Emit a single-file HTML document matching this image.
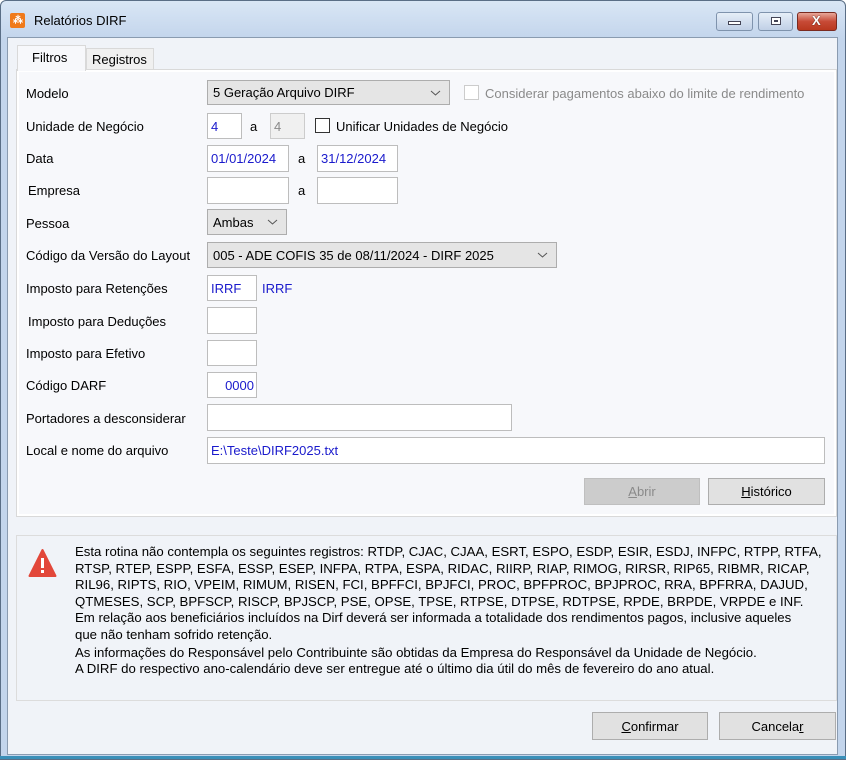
<!DOCTYPE html>
<html><head><meta charset="utf-8"><style>
*{box-sizing:border-box;margin:0;padding:0}
body{width:852px;height:763px;background:#fff;font-family:"Liberation Sans",sans-serif;font-size:13px;color:#000;position:relative;overflow:hidden}
.win{position:absolute;left:0;top:0;width:846px;height:760px;border:1px solid #5a6e86;border-radius:6px 6px 0 0;background:linear-gradient(#d9e6f5,#c3d5ec 38px,#c3d5ec);}
.client{position:absolute;left:7px;top:37px;width:831px;height:718px;background:#f0f3f8;border:1px solid #8a9bb0}
.bottomline{position:absolute;left:0;top:756px;width:846px;height:3px;background:#3a8fb8}
.a{position:absolute;white-space:nowrap}
.lbl{position:absolute;white-space:nowrap;font-size:13px}
.in{position:absolute;background:#fff;border:1px solid #bdbdbd;color:#1a1acc;padding-left:3px;font-size:13px;display:flex;align-items:center}
.dis{background:#f0f0f0;color:#888;border-color:#ccc}
.sel{position:absolute;background:#e5e5e5;border:1px solid #adadad;padding-left:5px;display:flex;align-items:center;font-size:13px}
.sel svg{position:absolute;right:8px;top:50%;margin-top:-3px}
.cb{position:absolute;width:15px;height:15px;background:#fff;border:1px solid #333}
.btn{position:absolute;background:#e1e1e1;border:1px solid #adadad;display:flex;align-items:center;justify-content:center;font-size:13px}
.wb{position:absolute;top:12px;height:19px;border:1px solid #7f93ad;border-radius:3px;background:linear-gradient(#e6eef8,#c0d0e6)}
</style></head><body>
<div class="win"></div>
<div class="a" style="left:10px;top:13px;width:15px;height:15px;background:#f07a1a;border-radius:2px"></div>
<div class="a" style="left:13px;top:15px;color:#fff;font-size:10px;font-weight:bold">⁂</div>
<div class="a" style="left:34px;top:13px;font-size:13px">Relatórios DIRF</div>
<div class="wb" style="left:716px;width:37px"><div style="position:absolute;left:11px;top:8px;width:13px;height:4px;background:#fff;border:1px solid #445"></div></div>
<div class="wb" style="left:758px;width:35px"><div style="position:absolute;left:12px;top:4px;width:10px;height:8px;border:1px solid #445;background:#fff"><div style="margin:2px;height:2px;background:#445"></div></div></div>
<div class="wb" style="left:797px;width:40px;background:linear-gradient(#e8a79a,#c74a36 50%,#b9381f);border-color:#7a2a20"><div style="position:absolute;left:14px;top:0px;color:#fff;font-weight:bold;font-size:13px;text-shadow:0 0 1px #000">X</div></div>
<div class="client"></div>
<div class="bottomline"></div>

<div class="a" style="left:86px;top:48px;width:68px;height:22px;background:#f0f0f0;border:1px solid #d9d9d9;border-bottom:none"></div>
<div class="a" style="left:92px;top:52px">Registros</div>
<div class="a" style="left:16px;top:69px;width:821px;height:448px;background:#f7f8fb;border:1px solid #d9d9d9;box-shadow:inset 0 0 0 2px #fff"></div>
<div class="a" style="left:17px;top:45px;width:69px;height:26px;background:#f7f8fb;border:1px solid #d9d9d9;border-bottom:none"></div>
<div class="a" style="left:32px;top:50px">Filtros</div>

<div class="lbl" style="left:26px;top:86px">Modelo</div>
<div class="sel" style="left:207px;top:80px;width:243px;height:25px">5 Geração Arquivo DIRF<svg width="11" height="6"><path d="M1 1l4.5 4 4.5-4" fill="none" stroke="#555"/></svg></div>
<div class="cb" style="left:464px;top:85px;border-color:#ccc"></div>
<div class="lbl" style="left:485px;top:86px;color:#8a8a8a">Considerar pagamentos abaixo do limite de rendimento</div>

<div class="lbl" style="left:26px;top:119px">Unidade de Negócio</div>
<div class="in" style="left:207px;top:113px;width:35px;height:26px">4</div>
<div class="lbl" style="left:250px;top:119px">a</div>
<div class="in dis" style="left:270px;top:113px;width:35px;height:26px">4</div>
<div class="cb" style="left:315px;top:118px"></div>
<div class="lbl" style="left:336px;top:119px">Unificar Unidades de Negócio</div>

<div class="lbl" style="left:26px;top:151px">Data</div>
<div class="in" style="left:207px;top:145px;width:82px;height:27px">01/01/2024</div>
<div class="lbl" style="left:298px;top:151px">a</div>
<div class="in" style="left:317px;top:145px;width:81px;height:27px">31/12/2024</div>

<div class="lbl" style="left:28px;top:183px">Empresa</div>
<div class="in" style="left:207px;top:177px;width:82px;height:27px"></div>
<div class="lbl" style="left:298px;top:183px">a</div>
<div class="in" style="left:317px;top:177px;width:81px;height:27px"></div>

<div class="lbl" style="left:26px;top:216px">Pessoa</div>
<div class="sel" style="left:207px;top:209px;width:80px;height:26px">Ambas<svg width="11" height="6"><path d="M1 1l4.5 4 4.5-4" fill="none" stroke="#555"/></svg></div>

<div class="lbl" style="left:26px;top:248px">Código da Versão do Layout</div>
<div class="sel" style="left:207px;top:242px;width:350px;height:26px">005 - ADE COFIS 35 de 08/11/2024 - DIRF 2025<svg width="11" height="6"><path d="M1 1l4.5 4 4.5-4" fill="none" stroke="#555"/></svg></div>

<div class="lbl" style="left:26px;top:281px">Imposto para Retenções</div>
<div class="in" style="left:207px;top:275px;width:50px;height:26px">IRRF</div>
<div class="lbl" style="left:262px;top:281px;color:#1a1acc">IRRF</div>

<div class="lbl" style="left:28px;top:314px">Imposto para Deduções</div>
<div class="in" style="left:207px;top:307px;width:50px;height:27px"></div>
<div class="lbl" style="left:26px;top:346px">Imposto para Efetivo</div>
<div class="in" style="left:207px;top:340px;width:50px;height:26px"></div>
<div class="lbl" style="left:26px;top:378px">Código DARF</div>
<div class="in" style="left:207px;top:372px;width:50px;height:26px;justify-content:flex-end;padding-right:2px">0000</div>
<div class="lbl" style="left:26px;top:411px">Portadores a desconsiderar</div>
<div class="in" style="left:207px;top:404px;width:305px;height:27px"></div>
<div class="lbl" style="left:26px;top:443px">Local e nome do arquivo</div>
<div class="in" style="left:207px;top:437px;width:618px;height:27px">E:\Teste\DIRF2025.txt</div>

<div class="btn" style="left:584px;top:478px;width:116px;height:27px;background:#ccc;border-color:#bfbfbf;color:#8a8a8a"><u>A</u>brir</div>
<div class="btn" style="left:708px;top:478px;width:117px;height:27px"><u>H</u>istórico</div>

<div class="a" style="left:16px;top:535px;width:821px;height:166px;border:1px solid #dcdcdc;background:#f0f3f8"></div>
<svg class="a" style="left:28px;top:548px" width="29" height="30"><path d="M14.5 2 L27.5 28 H1.5 Z" fill="#e2473a" stroke="#e2473a" stroke-linejoin="round" stroke-width="2"/><rect x="13" y="10" width="3" height="10" fill="#fff"/><rect x="13" y="22" width="3" height="3" fill="#fff"/></svg>
<div class="a" style="left:75px;top:544px;line-height:16.6px;font-size:13.2px">Esta rotina não contempla os seguintes registros: RTDP, CJAC, CJAA, ESRT, ESPO, ESDP, ESIR, ESDJ, INFPC, RTPP, RTFA,<br>RTSP, RTEP, ESPP, ESFA, ESSP, ESEP, INFPA, RTPA, ESPA, RIDAC, RIIRP, RIAP, RIMOG, RIRSR, RIP65, RIBMR, RICAP,<br>RIL96, RIPTS, RIO, VPEIM, RIMUM, RISEN, FCI, BPFFCI, BPJFCI, PROC, BPFPROC, BPJPROC, RRA, BPFRRA, DAJUD,<br>QTMESES, SCP, BPFSCP, RISCP, BPJSCP, PSE, OPSE, TPSE, RTPSE, DTPSE, RDTPSE, RPDE, BRPDE, VRPDE e INF.<br>Em relação aos beneficiários incluídos na Dirf deverá ser informada a totalidade dos rendimentos pagos, inclusive aqueles<br>que não tenham sofrido retenção.<br><span style="display:block;margin-top:1px">As informações do Responsável pelo Contribuinte são obtidas da Empresa do Responsável da Unidade de Negócio.</span>A DIRF do respectivo ano-calendário deve ser entregue até o último dia útil do mês de fevereiro do ano atual.</div>

<div class="btn" style="left:592px;top:712px;width:116px;height:28px"><u>C</u>onfirmar</div>
<div class="btn" style="left:719px;top:712px;width:117px;height:28px">Cancela<u>r</u></div>
</body></html>
